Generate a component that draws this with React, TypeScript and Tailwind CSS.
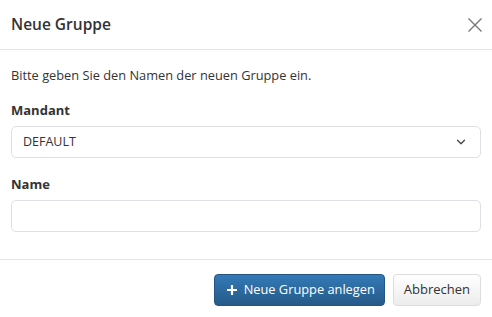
import { ChevronDown } from "lucide-react";

export default function App() {
  return (
    <div
      className="w-[492px] h-[317px] bg-white text-[#333] overflow-hidden"
      style={{ fontFamily: '"Open Sans", "Noto Sans", sans-serif' }}
    >
      {/* Header */}
      <div className="h-[50px] flex items-center justify-between pl-[11px] pr-[10px] border-b border-[#e5e5e5]">
        <div className="text-[15.5px] font-semibold text-[#333]">Neue Gruppe</div>
        <button className="text-[#777]">
          <svg width="14" height="14" viewBox="0 0 14 14" fill="none" stroke="currentColor" strokeWidth="1.4">
            <path d="M0.5 0.5 L13.5 13.5 M13.5 0.5 L0.5 13.5" />
          </svg>
        </button>
      </div>

      {/* Body */}
      <div className="px-[11px] pt-[16px] h-[210px] border-b border-[#e5e5e5]">
        <p className="text-[12.8px] leading-[18px]">Bitte geben Sie den Namen der neuen Gruppe ein.</p>

        <label className="block mt-[17px] text-[13px] font-bold leading-[18px]">Mandant</label>
        <div className="mt-[7px] h-[32px] flex items-center justify-between pl-[11px] pr-[12px] border border-[#dcdfe6] rounded-[5px] text-[12.5px]">
          <span>DEFAULT</span>
          <ChevronDown className="w-[14px] h-[14px] text-[#444]" strokeWidth={2.2} />
        </div>

        <label className="block mt-[17px] text-[13px] font-bold leading-[18px]">Name</label>
        <input
          className="mt-[7px] w-full h-[32px] border border-[#dcdfe6] rounded-[5px] px-[11px] text-[13px] outline-none"
          type="text"
        />
      </div>

      {/* Footer */}
      <div className="flex justify-end gap-[8px] pt-[14px] pr-[11px]">
        <button className="h-[32px] flex items-center gap-[7px] pl-[12px] pr-[9px] rounded-[4px] border border-[#245580] bg-gradient-to-b from-[#337ab7] to-[#265a88] text-white text-[12.8px]">
          <svg width="10" height="10" viewBox="0 0 10 10" stroke="currentColor" strokeWidth="2.2">
            <path d="M5 0 V10 M0 5 H10" />
          </svg>
          Neue Gruppe anlegen
        </button>
        <button className="h-[32px] px-[10px] rounded-[4px] border border-[#ddd] bg-gradient-to-b from-white to-[#ececec] text-[#333] text-[13px]">
          Abbrechen
        </button>
      </div>
    </div>
  );
}
